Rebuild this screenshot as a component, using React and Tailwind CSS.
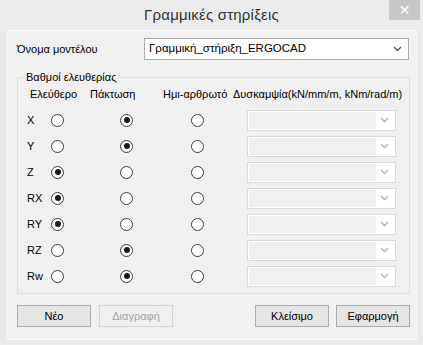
import React from "react";

function Chevron({ color = "#444" }) {
  return (
    <svg width="9" height="6" viewBox="0 0 9 6" className="block">
      <polyline points="1,1 4.5,4.5 8,1" fill="none" stroke={color} strokeWidth="1.4" />
    </svg>
  );
}

function Radio({ checked }) {
  return (
    <div className="w-[13px] h-[13px] rounded-full border border-[#3c3c3c] bg-white flex items-center justify-center shrink-0">
      {checked && <div className="w-[6px] h-[6px] rounded-full bg-[#1a1a1a]" />}
    </div>
  );
}

function DisabledSelect() {
  return (
    <div className="w-[149px] h-[21px] border border-[#dadada] bg-white flex items-center pl-[1px] pr-[6px]">
      <div className="w-[127px] h-[17px] bg-[#f0f0f0]" />
      <div className="ml-auto">
        <Chevron color="#b4b4b4" />
      </div>
    </div>
  );
}

const rows = [
  ["X", 1],
  ["Y", 1],
  ["Z", 0],
  ["RX", 0],
  ["RY", 0],
  ["RZ", 1],
  ["Rw", 1],
];

function Button({ children, disabled }) {
  return (
    <div
      className={
        "w-[74px] h-[22px] flex items-center justify-center border " +
        (disabled
          ? "border-[#d4d4d4] bg-[#f0f0f0] text-[#a3a3a3]"
          : "border-[#acacac] bg-[#e5e5e5] text-black")
      }
    >
      {children}
    </div>
  );
}

export default function App() {
  return (
    <div
      className="w-[423px] h-[345px] bg-[#ebebeb] relative text-[11px] text-black overflow-hidden whitespace-nowrap"
      style={{ fontFamily: '"Liberation Sans", "DejaVu Sans", sans-serif' }}
    >
      <div className="h-[30px] flex items-center justify-center">
        <span className="text-[15px] text-[#333] tracking-[0.2px]">Γραμμικές στηρίξεις</span>
      </div>
      <div className="absolute top-0 right-[3px] w-[31px] h-[20px] bg-[#c7c7c7] flex items-center justify-center text-white text-[14px] leading-none">
        ✕
      </div>

      <div className="ml-[7px] w-[410px] h-[310px] border border-[#f8f8f8] bg-[#f0f0f0] flex flex-col">
        <div className="mt-[7px] flex items-center h-[22px]">
          <div className="pl-[9px] w-[136px]">Όνομα μοντέλου</div>
          <div className="w-[265px] h-[22px] bg-white border border-[#ababab] flex items-center pl-[4px] pr-[6px] text-[11.5px]">
            <span>Γραμμική_στήριξη_ERGOCAD</span>
            <div className="ml-auto">
              <Chevron color="#555" />
            </div>
          </div>
        </div>

        <fieldset className="mt-[10px] ml-[9px] w-[393px] border border-[#dcdcdc] pb-[4px]">
          <legend className="ml-[6px] px-[2px] leading-[14px]">Βαθμοί ελευθερίας</legend>
          <div className="mt-[2px] h-[16px] flex items-center pl-[12px]">
            <div className="w-[60px]">Ελεύθερο</div>
            <div className="w-[73px]">Πάκτωση</div>
            <div className="w-[70px]">Ημι-αρθρωτό</div>
            <div>Δυσκαμψία(kN/mm/m, kNm/rad/m)</div>
          </div>
          <div className="mt-[5px] flex flex-col">
            {rows.map(([label, sel]) => (
              <div key={label} className="h-[26px] flex items-center pl-[9px]">
                <div className="w-[24px]">{label}</div>
                <Radio checked={sel === 0} />
                <div className="w-[56px]" />
                <Radio checked={sel === 1} />
                <div className="w-[58px]" />
                <Radio checked={sel === 2} />
                <div className="w-[43px]" />
                <DisabledSelect />
              </div>
            ))}
          </div>
        </fieldset>

        <div className="mt-[11px] ml-[9px] w-[393px] flex items-center">
          <Button>Νέο</Button>
          <div className="w-[8px]" />
          <Button disabled>Διαγραφή</Button>
          <div className="ml-auto flex gap-[7px]">
            <Button>Κλείσιμο</Button>
            <Button>Εφαρμογή</Button>
          </div>
        </div>
      </div>
    </div>
  );
}
